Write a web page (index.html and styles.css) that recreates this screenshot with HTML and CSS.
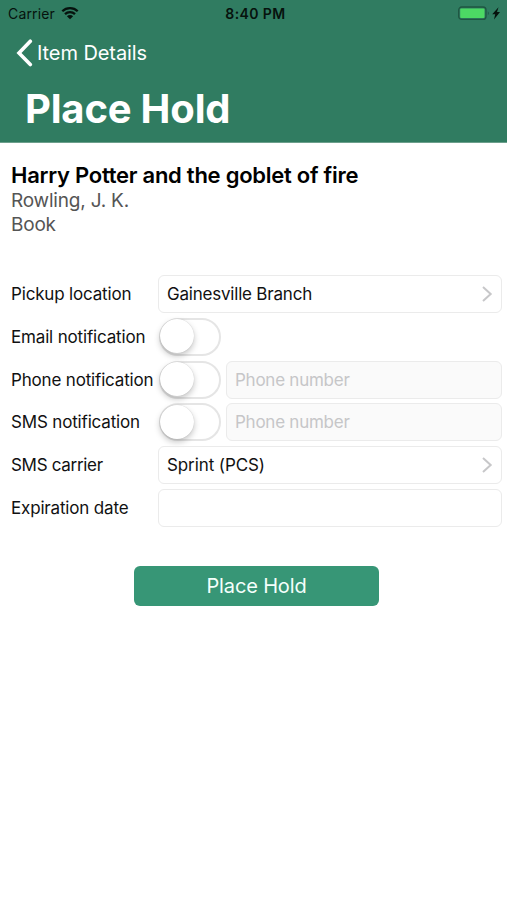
FILE: index.html
```html
<!DOCTYPE html>
<html lang="en">
<head>
<meta charset="utf-8">
<title>Place Hold</title>
<link rel="stylesheet" href="styles.css">
</head>
<body>
<header class="header">
  <div class="status">
    <div class="status-left">
      <span class="carrier">Carrier</span>
      <svg class="wifi" width="18" height="14" viewBox="0 0 18 14"><path d="M1.300 5.200a11 11 0 0 1 15.400 0M4 8.100a7.100 7.100 0 0 1 10 0" fill="none" stroke="#06120d" stroke-width="2.300"/><path d="M5.900 10.200a4.400 4.400 0 0 1 6.200 0L9 13.200z" fill="#06120d"/></svg>
    </div>
    <span class="time">8:40 PM</span>
    <div class="status-right">
      <svg width="46" height="15" viewBox="0 0 46 15"><rect x="1.700" y="1" width="27.300" height="12.400" rx="3" fill="none" stroke="#1f5642" stroke-width="1.300"/><rect x="3.200" y="2.500" width="24.300" height="9.500" rx="1" fill="#4cd964"/><path d="M30.800 5.200q2 2 0 4z" fill="#1f5642"/><path d="M41.500 1.200l-6.300 7.100h3l-1.200 5.200 6-7.400h-3z" fill="#06120d"/></svg>
    </div>
  </div>
  <nav class="back">
    <svg width="17" height="28" viewBox="0 0 17 28"><path d="M14.300 2.200L3 14l11.300 11.500" fill="none" stroke="#fff" stroke-width="3.600" stroke-linecap="round"/></svg>
    <span class="back-label">Item Details</span>
  </nav>
  <h1 class="title">Place Hold</h1>
</header>
<main class="content">
  <section class="item">
    <h2 class="item-title">Harry Potter and the goblet of fire</h2>
    <p class="item-line">Rowling, J. K.</p>
    <p class="item-line">Book</p>
  </section>
  <form class="form">
    <div class="row">
      <span class="label">Pickup location</span>
      <div class="field"><span>Gainesville Branch</span><svg class="chevron" width="12" height="18" viewBox="0 0 12 18"><path d="M2 2l7.700 7L2 16" fill="none" stroke="#c7c7c9" stroke-width="2"/></svg></div>
    </div>
    <div class="row">
      <span class="label">Email notification</span>
      <span class="switch"><span class="knob"></span></span>
    </div>
    <div class="row">
      <span class="label">Phone notification</span>
      <span class="switch"><span class="knob"></span></span>
      <div class="field disabled"><span>Phone number</span></div>
    </div>
    <div class="row">
      <span class="label">SMS notification</span>
      <span class="switch"><span class="knob"></span></span>
      <div class="field disabled"><span>Phone number</span></div>
    </div>
    <div class="row">
      <span class="label carrier-label">SMS carrier</span>
      <div class="field carrier-field"><span>Sprint (PCS)</span><svg class="chevron" width="12" height="18" viewBox="0 0 12 18"><path d="M2 2l7.700 7L2 16" fill="none" stroke="#c7c7c9" stroke-width="2"/></svg></div>
    </div>
    <div class="row">
      <span class="label">Expiration date</span>
      <div class="field"></div>
    </div>
    <button class="submit" type="button">Place Hold</button>
  </form>
</main>
</body>
</html>
```
FILE: styles.css
```css
* { box-sizing: border-box; }
body {
  margin: 0;
  height: 900px;
  overflow: hidden;
  background: #fff;
  color: #111;
  font-family: Inter, "Liberation Sans", sans-serif;
}
h1, h2, p { margin: 0; }
svg { display: block; flex: none; }
.header {
  height: 143px;
  background: #307c61;
  border-bottom: 1px solid #6c9f8c;
  color: #fff;
}
.status {
  display: grid;
  grid-template-columns: 1fr auto 1fr;
  align-items: center;
  height: 27px;
  padding: 0 4px 0 8px;
  color: #06120d;
  font-size: 14px;
}
.status-left { display: flex; align-items: center; gap: 6px; }
.status-right { display: flex; justify-content: flex-end; }
.wifi { margin-top: -1px; }
.carrier { letter-spacing: 0.15px; }
.time { font-weight: 600; letter-spacing: 0.4px; }
.back {
  display: flex;
  align-items: center;
  gap: 4px;
  height: 51px;
  padding-left: 16px;
}
.back-label { font-size: 20px; letter-spacing: -0.08px; }
.title {
  height: 62px;
  padding-left: 25px;
  font-size: 40px;
  line-height: 62px;
  font-weight: 700;
  letter-spacing: -0.2px;
}
.item { padding: 19px 11px 0; height: 132px; }
.item-title {
  font-size: 22px;
  line-height: 27px;
  font-weight: 600;
  letter-spacing: -0.26px;
  color: #000;
  white-space: nowrap;
}
.item-line { font-size: 19px; line-height: 24px; letter-spacing: -0.2px; color: #555; }
.form {
  display: grid;
  grid-template-rows: repeat(6, 38px);
  gap: 4.8px;
  padding: 0 5px 0 11px;
  letter-spacing: -0.17px;
}
.row { display: flex; align-items: center; }
.label { flex: 0 0 147px; font-size: 17px; white-space: nowrap; }
.carrier-label { letter-spacing: -0.3px; }
.field {
  flex: 1;
  display: flex;
  align-items: center;
  justify-content: space-between;
  height: 38px;
  padding: 0 8px;
  border: 1px solid #ebebeb;
  border-radius: 6px;
  font-size: 17px;
  letter-spacing: -0.21px;
}
.carrier-field { letter-spacing: -0.1px; }
.disabled { background: #fafafa; color: #c6c6c8; letter-spacing: -0.25px; }
.switch {
  flex: none;
  width: 62px;
  height: 38px;
  margin: 0 5px 0 1px;
  border: 2px solid #e5e5e5;
  border-radius: 19px;
}
.knob {
  display: block;
  width: 34px;
  height: 34px;
  margin: -0.5px 0 0 -1px;
  border-radius: 50%;
  background: #fff;
  box-shadow: 0 3px 6px rgba(0, 0, 0, 0.23), 0 0 1px rgba(0, 0, 0, 0.2);
}
.submit {
  width: 245px;
  height: 40px;
  margin: 34px 0 0 123px;
  padding: 0;
  border: 0;
  border-radius: 6px;
  background: #379676;
  color: #f4fffb;
  font: 20px Inter, "Liberation Sans", sans-serif;
  letter-spacing: -0.15px;
}
```
